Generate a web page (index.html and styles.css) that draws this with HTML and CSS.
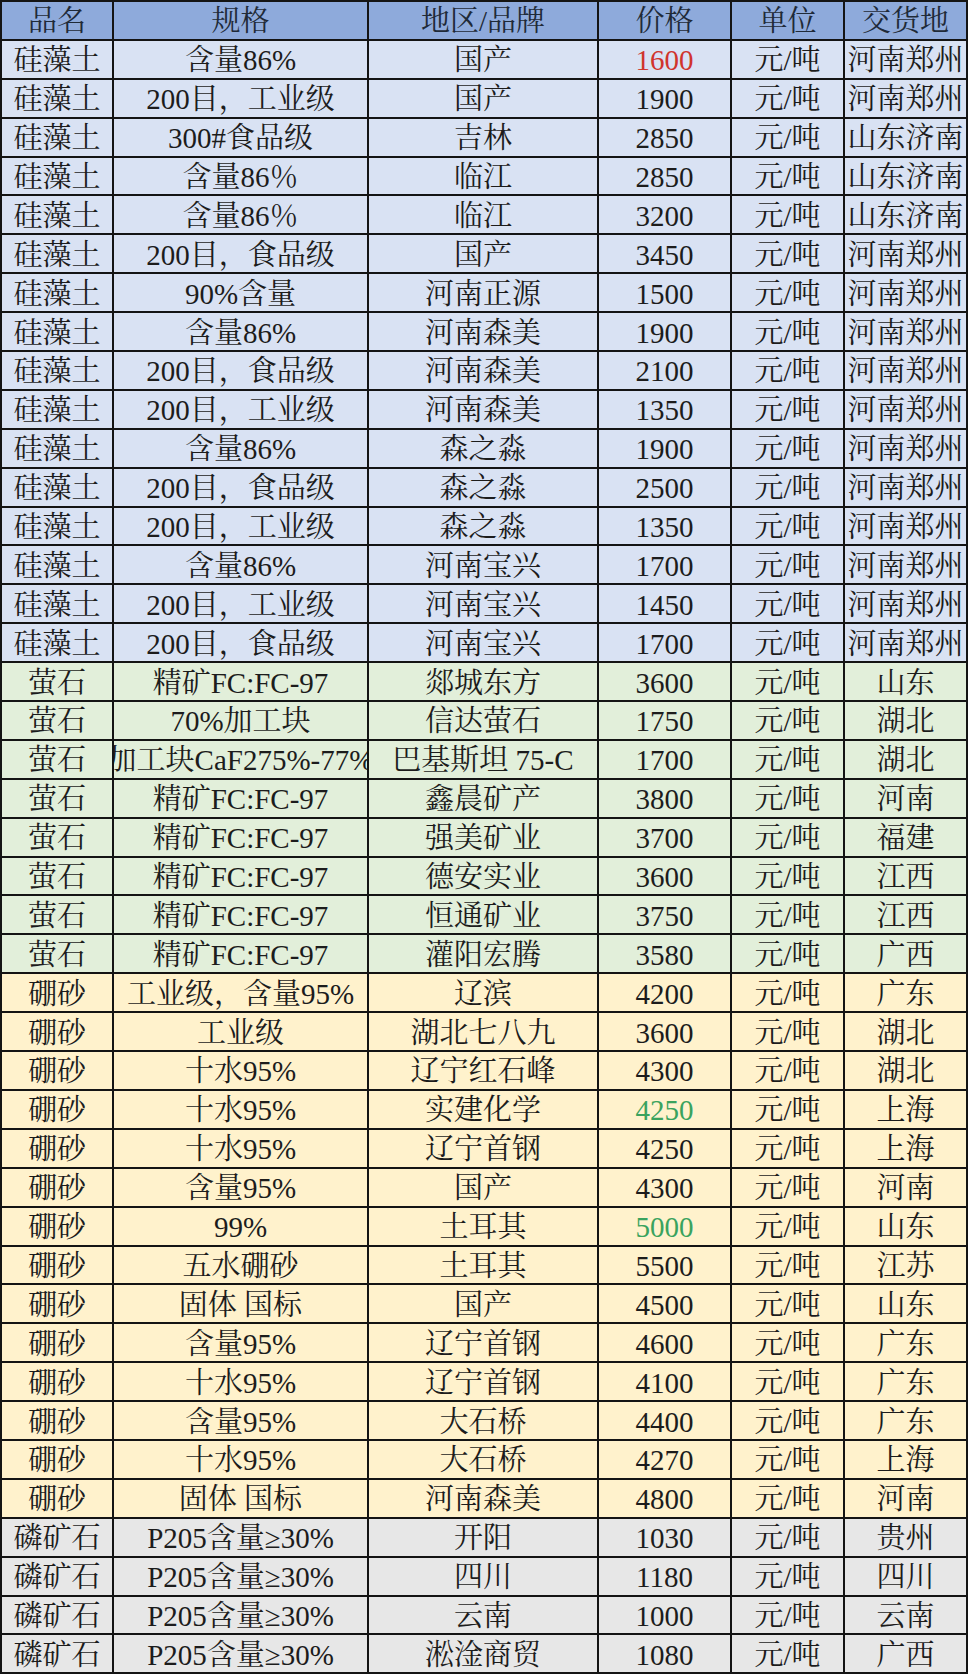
FILE: index.html
```html
<!DOCTYPE html>
<html lang="zh-CN">
<head>
<meta charset="utf-8">
<title>价格表</title>
<link rel="stylesheet" href="styles.css">
</head>
<body>
<div class="sheet">
  <div class="row head"><div class="c">品名</div><div class="c">规格</div><div class="c">地区/品牌</div><div class="c">价格</div><div class="c">单位</div><div class="c">交货地</div></div>

  <div class="row blue"><div class="c">硅藻土</div><div class="c">含量86%</div><div class="c">国产</div><div class="c red">1600</div><div class="c">元/吨</div><div class="c">河南郑州</div></div>
  <div class="row blue"><div class="c">硅藻土</div><div class="c">200目，工业级</div><div class="c">国产</div><div class="c">1900</div><div class="c">元/吨</div><div class="c">河南郑州</div></div>
  <div class="row blue"><div class="c">硅藻土</div><div class="c">300#食品级</div><div class="c">吉林</div><div class="c">2850</div><div class="c">元/吨</div><div class="c">山东济南</div></div>
  <div class="row blue"><div class="c">硅藻土</div><div class="c">含量86％</div><div class="c">临江</div><div class="c">2850</div><div class="c">元/吨</div><div class="c">山东济南</div></div>
  <div class="row blue"><div class="c">硅藻土</div><div class="c">含量86％</div><div class="c">临江</div><div class="c">3200</div><div class="c">元/吨</div><div class="c">山东济南</div></div>
  <div class="row blue"><div class="c">硅藻土</div><div class="c">200目，食品级</div><div class="c">国产</div><div class="c">3450</div><div class="c">元/吨</div><div class="c">河南郑州</div></div>
  <div class="row blue"><div class="c">硅藻土</div><div class="c">90%含量</div><div class="c">河南正源</div><div class="c">1500</div><div class="c">元/吨</div><div class="c">河南郑州</div></div>
  <div class="row blue"><div class="c">硅藻土</div><div class="c">含量86%</div><div class="c">河南森美</div><div class="c">1900</div><div class="c">元/吨</div><div class="c">河南郑州</div></div>
  <div class="row blue"><div class="c">硅藻土</div><div class="c">200目，食品级</div><div class="c">河南森美</div><div class="c">2100</div><div class="c">元/吨</div><div class="c">河南郑州</div></div>
  <div class="row blue"><div class="c">硅藻土</div><div class="c">200目，工业级</div><div class="c">河南森美</div><div class="c">1350</div><div class="c">元/吨</div><div class="c">河南郑州</div></div>
  <div class="row blue"><div class="c">硅藻土</div><div class="c">含量86%</div><div class="c">森之淼</div><div class="c">1900</div><div class="c">元/吨</div><div class="c">河南郑州</div></div>
  <div class="row blue"><div class="c">硅藻土</div><div class="c">200目，食品级</div><div class="c">森之淼</div><div class="c">2500</div><div class="c">元/吨</div><div class="c">河南郑州</div></div>
  <div class="row blue"><div class="c">硅藻土</div><div class="c">200目，工业级</div><div class="c">森之淼</div><div class="c">1350</div><div class="c">元/吨</div><div class="c">河南郑州</div></div>
  <div class="row blue"><div class="c">硅藻土</div><div class="c">含量86%</div><div class="c">河南宝兴</div><div class="c">1700</div><div class="c">元/吨</div><div class="c">河南郑州</div></div>
  <div class="row blue"><div class="c">硅藻土</div><div class="c">200目，工业级</div><div class="c">河南宝兴</div><div class="c">1450</div><div class="c">元/吨</div><div class="c">河南郑州</div></div>
  <div class="row blue"><div class="c">硅藻土</div><div class="c">200目，食品级</div><div class="c">河南宝兴</div><div class="c">1700</div><div class="c">元/吨</div><div class="c">河南郑州</div></div>

  <div class="row green"><div class="c">萤石</div><div class="c">精矿FC:FC-97</div><div class="c">郯城东方</div><div class="c">3600</div><div class="c">元/吨</div><div class="c">山东</div></div>
  <div class="row green"><div class="c">萤石</div><div class="c">70%加工块</div><div class="c">信达萤石</div><div class="c">1750</div><div class="c">元/吨</div><div class="c">湖北</div></div>
  <div class="row green"><div class="c">萤石</div><div class="c">加工块CaF275%-77%</div><div class="c">巴基斯坦 75-C</div><div class="c">1700</div><div class="c">元/吨</div><div class="c">湖北</div></div>
  <div class="row green"><div class="c">萤石</div><div class="c">精矿FC:FC-97</div><div class="c">鑫晨矿产</div><div class="c">3800</div><div class="c">元/吨</div><div class="c">河南</div></div>
  <div class="row green"><div class="c">萤石</div><div class="c">精矿FC:FC-97</div><div class="c">强美矿业</div><div class="c">3700</div><div class="c">元/吨</div><div class="c">福建</div></div>
  <div class="row green"><div class="c">萤石</div><div class="c">精矿FC:FC-97</div><div class="c">德安实业</div><div class="c">3600</div><div class="c">元/吨</div><div class="c">江西</div></div>
  <div class="row green"><div class="c">萤石</div><div class="c">精矿FC:FC-97</div><div class="c">恒通矿业</div><div class="c">3750</div><div class="c">元/吨</div><div class="c">江西</div></div>
  <div class="row green"><div class="c">萤石</div><div class="c">精矿FC:FC-97</div><div class="c">灌阳宏腾</div><div class="c">3580</div><div class="c">元/吨</div><div class="c">广西</div></div>

  <div class="row yellow"><div class="c">硼砂</div><div class="c">工业级，含量95%</div><div class="c">辽滨</div><div class="c">4200</div><div class="c">元/吨</div><div class="c">广东</div></div>
  <div class="row yellow"><div class="c">硼砂</div><div class="c">工业级</div><div class="c">湖北七八九</div><div class="c">3600</div><div class="c">元/吨</div><div class="c">湖北</div></div>
  <div class="row yellow"><div class="c">硼砂</div><div class="c">十水95%</div><div class="c">辽宁红石峰</div><div class="c">4300</div><div class="c">元/吨</div><div class="c">湖北</div></div>
  <div class="row yellow"><div class="c">硼砂</div><div class="c">十水95%</div><div class="c">实建化学</div><div class="c grn">4250</div><div class="c">元/吨</div><div class="c">上海</div></div>
  <div class="row yellow"><div class="c">硼砂</div><div class="c">十水95%</div><div class="c">辽宁首钢</div><div class="c">4250</div><div class="c">元/吨</div><div class="c">上海</div></div>
  <div class="row yellow"><div class="c">硼砂</div><div class="c">含量95%</div><div class="c">国产</div><div class="c">4300</div><div class="c">元/吨</div><div class="c">河南</div></div>
  <div class="row yellow"><div class="c">硼砂</div><div class="c">99%</div><div class="c">土耳其</div><div class="c grn">5000</div><div class="c">元/吨</div><div class="c">山东</div></div>
  <div class="row yellow"><div class="c">硼砂</div><div class="c">五水硼砂</div><div class="c">土耳其</div><div class="c">5500</div><div class="c">元/吨</div><div class="c">江苏</div></div>
  <div class="row yellow"><div class="c">硼砂</div><div class="c">固体 国标</div><div class="c">国产</div><div class="c">4500</div><div class="c">元/吨</div><div class="c">山东</div></div>
  <div class="row yellow"><div class="c">硼砂</div><div class="c">含量95%</div><div class="c">辽宁首钢</div><div class="c">4600</div><div class="c">元/吨</div><div class="c">广东</div></div>
  <div class="row yellow"><div class="c">硼砂</div><div class="c">十水95%</div><div class="c">辽宁首钢</div><div class="c">4100</div><div class="c">元/吨</div><div class="c">广东</div></div>
  <div class="row yellow"><div class="c">硼砂</div><div class="c">含量95%</div><div class="c">大石桥</div><div class="c">4400</div><div class="c">元/吨</div><div class="c">广东</div></div>
  <div class="row yellow"><div class="c">硼砂</div><div class="c">十水95%</div><div class="c">大石桥</div><div class="c">4270</div><div class="c">元/吨</div><div class="c">上海</div></div>
  <div class="row yellow"><div class="c">硼砂</div><div class="c">固体 国标</div><div class="c">河南森美</div><div class="c">4800</div><div class="c">元/吨</div><div class="c">河南</div></div>

  <div class="row grey"><div class="c">磷矿石</div><div class="c">P205含量≥30%</div><div class="c">开阳</div><div class="c">1030</div><div class="c">元/吨</div><div class="c">贵州</div></div>
  <div class="row grey"><div class="c">磷矿石</div><div class="c">P205含量≥30%</div><div class="c">四川</div><div class="c">1180</div><div class="c">元/吨</div><div class="c">四川</div></div>
  <div class="row grey"><div class="c">磷矿石</div><div class="c">P205含量≥30%</div><div class="c">云南</div><div class="c">1000</div><div class="c">元/吨</div><div class="c">云南</div></div>
  <div class="row grey"><div class="c">磷矿石</div><div class="c">P205含量≥30%</div><div class="c">淞淦商贸</div><div class="c">1080</div><div class="c">元/吨</div><div class="c">广西</div></div>
</div>
</body>
</html>
```

FILE: styles.css
```css
html, body {
  margin: 0;
  padding: 0;
  background: #ffffff;
}

.sheet {
  display: grid;
  width: 968px;
  box-sizing: border-box;
  padding: 2px;
  gap: 2px;
  background: #141414;
  grid-template-columns: 110px 253px 228px 131px 111px 121px;
  grid-template-rows: repeat(43, 36.9px);
  font-family: "Liberation Serif", "Noto Serif CJK SC", "Noto Sans CJK SC", serif;
  font-size: 29px;
  color: #1c1c1c;
}

.row {
  display: contents;
}

.c {
  display: flex;
  align-items: center;
  justify-content: center;
  overflow: hidden;
  white-space: nowrap;
  line-height: 1;
  padding-top: 3px;
}

.head .c { background: #8eaadb; color: #1f2a38; }
.blue .c { background: #d9e2f3; }
.green .c { background: #e2efda; }
.yellow .c { background: #fff2cc; }
.grey .c { background: #e7e7e7; }

.blue .c.red { color: #d0342c; }
.yellow .c.grn { color: #3aa35e; }
```
